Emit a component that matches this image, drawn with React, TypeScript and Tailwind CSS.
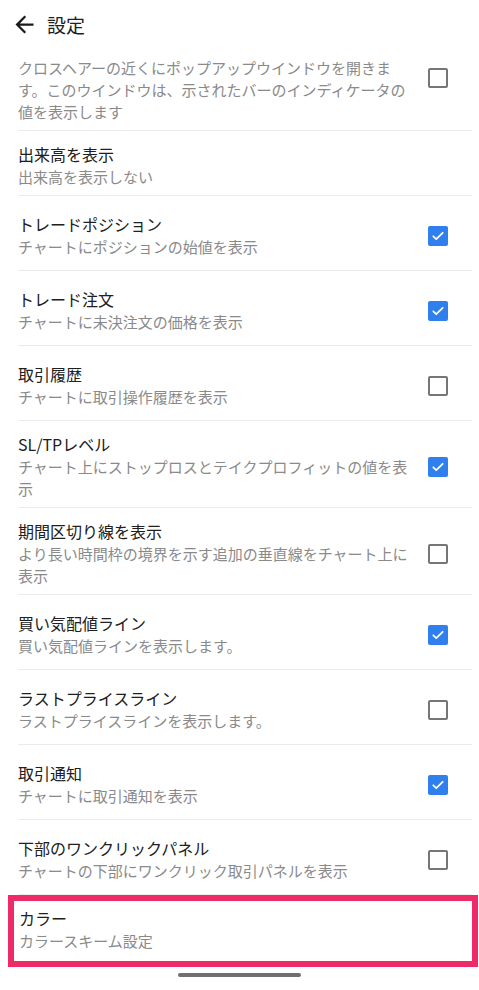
import { useState } from 'react'

type Setting = {
  title?: string
  sub: string
  checked?: boolean
}

const settings: Setting[] = [
  {
    // title scrolled out of view under the header
    sub: 'クロスヘアーの近くにポップアップウインドウを開きます。このウインドウは、示されたバーのインディケータの値を表示します',
    checked: false,
  },
  { title: '出来高を表示', sub: '出来高を表示しない' },
  { title: 'トレードポジション', sub: 'チャートにポジションの始値を表示', checked: true },
  { title: 'トレード注文', sub: 'チャートに未決注文の価格を表示', checked: true },
  { title: '取引履歴', sub: 'チャートに取引操作履歴を表示', checked: false },
  { title: 'SL/TPレベル', sub: 'チャート上にストップロスとテイクプロフィットの値を表示', checked: true },
  { title: '期間区切り線を表示', sub: 'より長い時間枠の境界を示す追加の垂直線をチャート上に表示', checked: false },
  { title: '買い気配値ライン', sub: '買い気配値ラインを表示します。', checked: true },
  { title: 'ラストプライスライン', sub: 'ラストプライスラインを表示します。', checked: false },
  { title: '取引通知', sub: 'チャートに取引通知を表示', checked: true },
  { title: '下部のワンクリックパネル', sub: 'チャートの下部にワンクリック取引パネルを表示', checked: false },
]

function Checkbox({ checked, onToggle }: { checked: boolean; onToggle: () => void }) {
  if (checked) {
    return (
      <button onClick={onToggle} className="w-[20px] h-[20px] rounded-[2px] bg-[#2f7fee] flex items-center justify-center">
        <svg width="14" height="14" viewBox="0 0 24 24" fill="none">
          <path d="M4 12.5l5 5L20 6.5" stroke="#fff" strokeWidth="3" strokeLinecap="round" strokeLinejoin="round" />
        </svg>
      </button>
    )
  }
  return <button onClick={onToggle} className="w-[20px] h-[20px] rounded-[2px] border-2 border-[#767676] bg-white" />
}

export default function App() {
  const [values, setValues] = useState(settings.map((s) => s.checked))

  const toggle = (i: number) => setValues((v) => v.map((x, j) => (j === i ? !x : x)))

  return (
    <div
      className="w-[479px] h-[990px] bg-white flex flex-col overflow-hidden text-[#202020]"
      style={{ fontFamily: '"Noto Sans CJK JP", "Noto Sans", sans-serif' }}
    >
      {/* Header */}
      <div className="h-[48px] shrink-0 flex items-center bg-white">
        <button className="ml-[11px] w-[27px] h-[27px] flex items-center justify-center">
          <svg width="27" height="27" viewBox="0 0 24 24" fill="#1a1a1a">
            <path d="M20 11H7.83l5.59-5.59L12 4l-8 8 8 8 1.41-1.41L7.83 13H20v-2z" />
          </svg>
        </button>
        <h1 className="ml-[9px] text-[19px] leading-[26px] mt-[2px]">設定</h1>
      </div>

      {/* List */}
      <div className="flex-1 overflow-hidden flex flex-col">
        <div>
          {settings.map((s, i) => (
            <div
              key={s.sub}
              className={`ml-[18px] mr-[7px] flex items-center border-b border-[#ebebeb] ${
                s.title ? 'pt-[12px]' : 'pt-[9px]'
              } pb-[7px] ${values[i] === undefined ? '' : 'min-h-[75px]'}`}
            >
              <div className="w-[396px]">
                {s.title && <div className="text-[16px] leading-[23px] text-[#202020]">{s.title}</div>}
                <div className="text-[15px] leading-[22px] text-[#8a8a8a]">{s.sub}</div>
              </div>
              {values[i] !== undefined && (
                <div className={`ml-[14px] flex items-center ${s.title ? '' : 'mb-[24px]'}`}>
                  <Checkbox checked={!!values[i]} onToggle={() => toggle(i)} />
                </div>
              )}
            </div>
          ))}
        </div>

        {/* Highlighted color row */}
        <div className="ml-[8px] mr-[1px] border-[6px] border-[#ef2b67] pl-[5px] pt-[6px] pb-[9px]">
          <div className="text-[16px] leading-[23px] text-[#202020]">カラー</div>
          <div className="text-[15px] leading-[22px] text-[#8a8a8a]">カラースキーム設定</div>
        </div>

        <div className="mt-[6px] mx-auto w-[123px] h-[4px] rounded-full bg-[#707070]" />
      </div>
    </div>
  )
}
